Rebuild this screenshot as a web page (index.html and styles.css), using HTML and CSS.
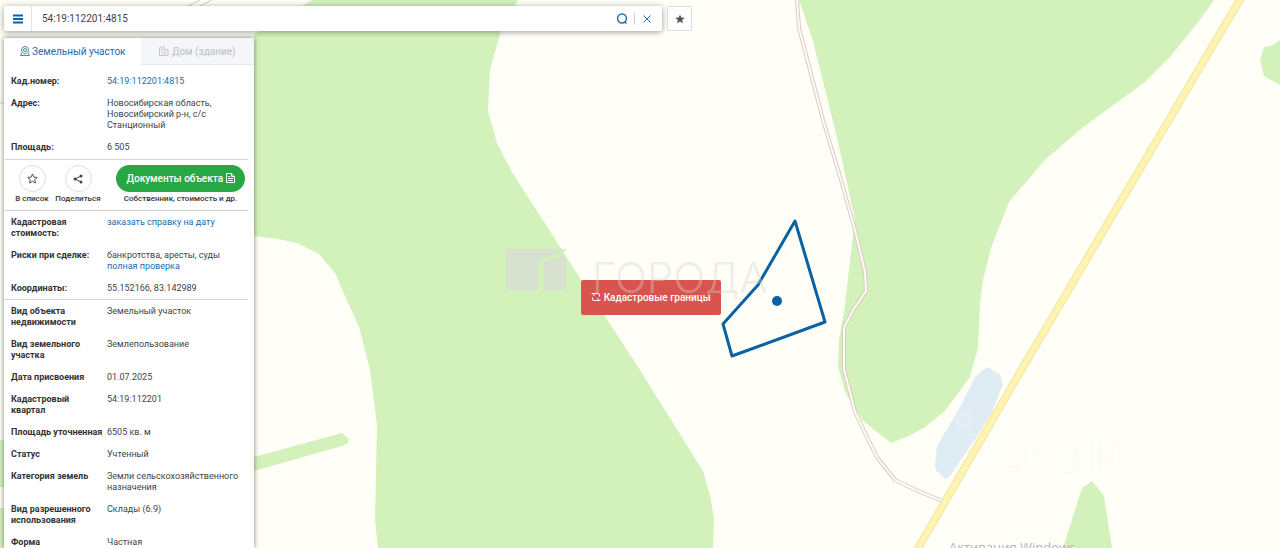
FILE: index.html
```
<!DOCTYPE html>
<html lang="ru">
<head>
  <meta charset="UTF-8">
  <meta name="viewport" content="width=device-width, initial-scale=1.0">
  <title>Кадастровая карта</title>
  <link rel="stylesheet" href="styles.css">
</head>
<body>
  <!-- Map -->
  <svg class="map" viewBox="0 0 1280 548" preserveAspectRatio="xMinYMin slice" aria-hidden="true">
    <g class="forest">
      <path d="M312 0H518L501 31L490 70L488 111L497 143L512 172L580 278L640 370L703 471L710 495L714 518L713 548H378L375 520L377 425L370 370L359 327L345 296L335 273L319 254L297 243L278 239L254 236V34Z"/>
      <path d="M799 0L813 41L838 142L855 220L850 260L845 305L839 340L838 366L845 392L862 420L891 443L909 436L925 427L945 411L970 377L978 348L980 305L983 280L991 248L1009 202L1045 160L1082 128L1145 82L1170 57L1200 20L1214 0Z"/>
      <path d="M1280 40L1273 45L1264 47L1260 60L1264 76L1280 85Z"/>
      <path d="M1063 548L1082 488L1092 481L1104 496L1112 548Z"/>
      <path d="M254 457L342 433L349 439L348 443L342 446L254 471Z"/>
      <path d="M0 440H4V487H0ZM0 508H4V548H0Z"/>
    </g>
    <path class="water" d="M987 367L1000 374L1003 384L993 410L980 432L950 476L945 479L936 470L935 465L937 446L960 407L975 377Z"/>
    <path class="track-edge" d="M188 6L200 0M200 6L212 0M0 103H4"/>
    <path class="track-edge road" d="M797 0L799 28L823 120L841 180L855 230L865 272L866 291L853 310L844 328V369L855 412L865 433L877 457L895 480L920 492L943 501"/>
    <path class="track-fill road" d="M797 0L799 28L823 120L841 180L855 230L865 272L866 291L853 310L844 328V369L855 412L865 433L877 457L895 480L920 492L943 501"/>
    <path class="highway-edge" d="M1241 -2L1033 350L917 550"/>
    <path class="highway" d="M1241 -2L1033 350L917 550"/>
    <path class="plot" d="M795 221L825 322L732 356L723 324L758 285Z"/>
    <circle class="plot-point" cx="777" cy="301" r="5"/>
  </svg>

  <!-- Search -->
  <header class="topbar">
    <form class="search">
      <button class="menu-button" type="button" aria-label="Меню">
        <svg width="10" height="10" viewBox="0 0 10 10"><path d="M0 1.500H10M0 5H10M0 8.500H10" stroke="currentColor" stroke-width="2"/></svg>
      </button>
      <input type="text" value="54:19:112201:4815" aria-label="Кадастровый номер">
      <button class="icon-button find" type="submit" aria-label="Найти">
        <svg width="12" height="12" viewBox="0 0 12 12" fill="none" stroke="currentColor" stroke-width="1.500"><circle cx="6" cy="5.500" r="4.400"/><path d="M8.500 8.500L10.500 10.500"/></svg>
      </button>
      <button class="icon-button clear" type="reset" aria-label="Очистить">
        <svg width="8" height="8" viewBox="0 0 8 8" stroke="currentColor"><path d="M.5 .5L7.500 7.500M7.500 .5L.5 7.500"/></svg>
      </button>
    </form>
    <button class="favorites" type="button" aria-label="Избранное">
      <svg width="10" height="10" viewBox="0 0 24 24" fill="currentColor"><path d="M12 1l3.200 7.300 8 .8-6 5.300 1.800 7.800-7-4.100-7 4.100 1.800-7.800-6-5.300 8-.8z"/></svg>
    </button>
  </header>

  <!-- Object card -->
  <aside class="panel">
    <nav class="tabs">
      <button class="tab active" type="button">
        <svg width="10" height="10" viewBox="0 0 20 20" fill="none" stroke="currentColor" stroke-width="1.600"><path d="M10 16C5 13 3 11 3 8a7 7 0 0 1 14 0c0 3-2 5-7 8z"/><circle cx="10" cy="8" r="3"/><path d="M4 13L1 19H19L16 13"/></svg>
        Земельный участок
      </button>
      <button class="tab" type="button">
        <svg width="10" height="10" viewBox="0 0 20 20" fill="none" stroke="currentColor" stroke-width="2"><path d="M1 19V3L10 1V19ZM10 7H18V19H0M4 6H7M4 10H7M4 14H7M13 11H15M13 15H15"/></svg>
        Дом (здание)
      </button>
    </nav>

    <div class="card">
      <table>
        <tr><th scope="row">Кад.номер:</th><td><a href="#">54:19:112201:4815</a></td></tr>
        <tr><th scope="row">Адрес:</th><td>Новосибирская область, Новосибирский р-н, с/с Станционный</td></tr>
        <tr><th scope="row">Площадь:</th><td>6 505</td></tr>
      </table>

      <div class="actions">
        <button class="action" type="button">
          <span class="circle"><svg width="11" height="11" viewBox="0 0 24 24" fill="none" stroke="currentColor" stroke-width="2"><path d="M12 2l3 7 7.500.7-5.700 5 1.700 7.300-6.500-3.900L5.500 22l1.700-7.300-5.700-5L9 9z"/></svg></span>
          В список
        </button>
        <button class="action" type="button">
          <span class="circle"><svg width="10" height="10" viewBox="0 0 20 20" fill="currentColor"><path d="M16 4L4 10L16 16" fill="none" stroke="currentColor" stroke-width="2"/><circle cx="16" cy="4" r="3"/><circle cx="4" cy="10" r="3"/><circle cx="16" cy="16" r="3"/></svg></span>
          Поделиться
        </button>
        <div class="documents">
          <button class="documents-button" type="button">
            Документы объекта
            <svg width="9" height="10" viewBox="0 0 18 20" fill="none" stroke="currentColor" stroke-width="2"><path d="M1 1H11L17 7V19H1ZM11 1V7H17M4 7H8M4 11H14M4 15H14"/></svg>
          </button>
          <span>Собственник, стоимость и др.</span>
        </div>
      </div>

      <table class="costs">
        <tr><th scope="row">Кадастровая стоимость:</th><td><a href="#">заказать справку на дату</a></td></tr>
        <tr><th scope="row">Риски при сделке:</th><td>банкротства, аресты, суды <a class="check" href="#">полная проверка</a></td></tr>
        <tr><th scope="row">Координаты:</th><td>55.152166, 83.142989</td></tr>
      </table>

      <table class="details">
        <tr><th scope="row">Вид объекта недвижимости</th><td>Земельный участок</td></tr>
        <tr><th scope="row">Вид земельного участка</th><td>Землепользование</td></tr>
        <tr><th scope="row">Дата присвоения</th><td>01.07.2025</td></tr>
        <tr><th scope="row">Кадастровый квартал</th><td>54:19:112201</td></tr>
        <tr><th scope="row">Площадь уточненная</th><td>6505 кв. м</td></tr>
        <tr><th scope="row">Статус</th><td>Учтенный</td></tr>
        <tr><th scope="row">Категория земель</th><td>Земли сельскохозяйственного назначения</td></tr>
        <tr><th scope="row">Вид разрешенного использования</th><td>Склады (6.9)</td></tr>
        <tr><th scope="row">Форма</th><td>Частная</td></tr>
      </table>
    </div>
  </aside>

  <button class="borders-button" type="button">
    <svg width="10" height="10" viewBox="0 0 20 20" fill="none" stroke="currentColor" stroke-width="2"><path d="M6 3H14Q17 3 17 6V9M14 17H6Q3 17 3 14V11M1 3H6V8M19 17H14V12"/></svg>
    Кадастровые границы
  </button>

  <!-- Watermarks -->
  <svg class="map watermarks" viewBox="0 0 1280 548" preserveAspectRatio="xMinYMin slice">
    <path class="logo" d="M506 249H566V251L538 260V290H506ZM544 262L566 255V290H544Z"/>
    <text class="goroda" x="592" y="293">ГОРОДА</text>
    <circle class="cian-pin" cx="964" cy="420" r="7"/>
    <text class="cian" x="986" y="472">циан</text>
    <text class="windows" x="949" y="552">Активация Windows</text>
  </svg>
</body>
</html>
```
FILE: styles.css
```
* {
  box-sizing: border-box;
}

body {
  display: flex;
  flex-direction: column;
  height: 100vh;
  margin: 0;
  overflow: hidden;
  background-color: #fffff8;
  color: #444;
  font-family: Roboto, "Liberation Sans", sans-serif;
  font-size: 9px;
  line-height: 11px;
}

button,
input {
  padding: 0;
  border: none;
  background: none;
  color: inherit;
  font: inherit;
}

button {
  cursor: pointer;
}

a {
  color: #1a6bb3;
  text-decoration: none;
}

/* Map */

.map {
  position: absolute;
  top: 0;
  left: 0;
  width: 100%;
  height: 100%;
}

.forest {
  fill: #d3f2bb;
}

.water {
  fill: #e0ecf3;
}

.track-edge,
.track-fill,
.highway-edge,
.highway,
.plot {
  fill: none;
  stroke-linejoin: round;
}

.track-edge {
  stroke: #cfcac6;
}

.track-edge.road {
  stroke: #dccac0;
  stroke-width: 4;
}

.track-fill {
  stroke: #fffdf8;
  stroke-width: 2;
}

.highway-edge {
  stroke: #f3e3a8;
  stroke-width: 8;
}

.highway {
  stroke: #fdf4b0;
  stroke-width: 6;
}

.plot {
  stroke: #0862a3;
  stroke-width: 3;
}

.plot-point {
  fill: #0862a3;
}

/* Search bar */

.topbar {
  position: relative;
  z-index: 2;
  display: flex;
  gap: 5px;
  padding: 6px 4px 0;
}

.search {
  display: flex;
  align-items: center;
  width: 658px;
  height: 25px;
  background-color: #fff;
  border-radius: 2px;
  box-shadow: 0 1px 6px rgba(0, 0, 0, 0.4);
  color: #1f72a6;
}

.search button {
  display: flex;
  align-items: center;
  justify-content: center;
}

.search .menu-button {
  width: 28px;
  height: 25px;
  border-right: 1px solid #e2e2e2;
  color: #0862a3;
}

.search input {
  flex: 1;
  min-width: 0;
  padding-left: 10px;
  color: #444;
  font-size: 10px;
  outline: none;
}

.icon-button {
  width: 24px;
  height: 12px;
}

.icon-button.clear {
  margin-right: 4px;
  border-left: 1px solid #ddc9c4;
}

.favorites {
  display: flex;
  align-items: center;
  justify-content: center;
  width: 25px;
  height: 25px;
  background-color: #fff;
  border: 1px solid #ddd;
  border-radius: 2px;
  color: #555;
}

/* Object card */

.panel {
  position: relative;
  z-index: 1;
  display: flex;
  flex: 1;
  flex-direction: column;
  width: 250px;
  min-height: 0;
  margin: 7px 0 0 4px;
  background-color: #fff;
  box-shadow: 0 0 5px rgba(0, 0, 0, 0.5);
}

.tabs {
  display: flex;
}

.tab {
  flex: 1;
  height: 27px;
  background-color: #f5f6fa;
  border-bottom: 1px solid #e8e9ee;
  color: #c6c8cc;
  font-size: 10px;
  font-weight: 500;
}

.tab.active {
  flex: 0 0 137px;
  background-color: #fff;
  border-color: #fff;
  color: #1a6bb3;
  font-weight: 400;
}

.tab svg,
.documents-button svg,
.borders-button svg {
  vertical-align: -1px;
}

.card {
  flex: 1;
  min-height: 0;
  padding: 6px 6px 0 1px;
  overflow-y: auto;
  scrollbar-width: none;
}

table {
  width: 100%;
  border-bottom: 1px solid #d4d4d4;
  border-spacing: 0;
  table-layout: fixed;
}

table.details {
  border-bottom: none;
}

th,
td {
  padding: 5px 0 6px 6px;
  text-align: left;
  vertical-align: top;
}

.costs th,
.costs td,
.details th,
.details td {
  padding-top: 6px;
  padding-bottom: 5px;
}

th {
  width: 100px;
  color: #333;
  font-weight: 700;
}

td {
  padding-left: 2px;
}

.check {
  display: block;
}

.actions {
  display: flex;
  align-items: flex-start;
  height: 51px;
  padding: 5px 3px 0 4px;
  border-bottom: 1px solid #d4d4d4;
  color: #333;
  font-size: 8px;
  font-weight: 500;
  line-height: 10px;
}

.action {
  display: flex;
  flex-direction: column;
  align-items: center;
  gap: 2px;
  width: 46px;
  white-space: nowrap;
}

.circle {
  display: flex;
  align-items: center;
  justify-content: center;
  width: 27px;
  height: 27px;
  background-color: #fff;
  border: 1px solid #ddd;
  border-radius: 50%;
  color: #444;
}

.documents {
  display: flex;
  flex-direction: column;
  align-items: center;
  gap: 2px;
  margin-left: auto;
}

.documents-button {
  width: 129px;
  height: 27px;
  background-color: #28a745;
  border-radius: 14px;
  color: #fff;
  font-size: 10px;
}

/* Refresh button over the map */

.borders-button {
  position: absolute;
  top: 280px;
  left: 581px;
  width: 140px;
  height: 35px;
  background-color: #d9534f;
  border-radius: 2px;
  color: #fff;
  font-size: 10px;
  font-weight: 500;
}

/* Watermarks */

.watermarks {
  z-index: 3;
  pointer-events: none;
}

.logo {
  fill: #dcd3dc;
  fill-opacity: 0.6;
}

.goroda {
  fill: #d8cfcf;
  fill-opacity: 0.4;
  font-family: Inter, sans-serif;
  font-size: 42px;
  font-weight: 300;
}

.cian {
  fill: none;
  stroke: #fafaf3;
  font-size: 60px;
  font-weight: 700;
}

.cian-pin {
  fill: none;
  stroke: #e4eef4;
  stroke-width: 4;
}

.windows {
  fill: #b5b5b2;
  font-family: "Open Sans", sans-serif;
  font-size: 13px;
}
```
